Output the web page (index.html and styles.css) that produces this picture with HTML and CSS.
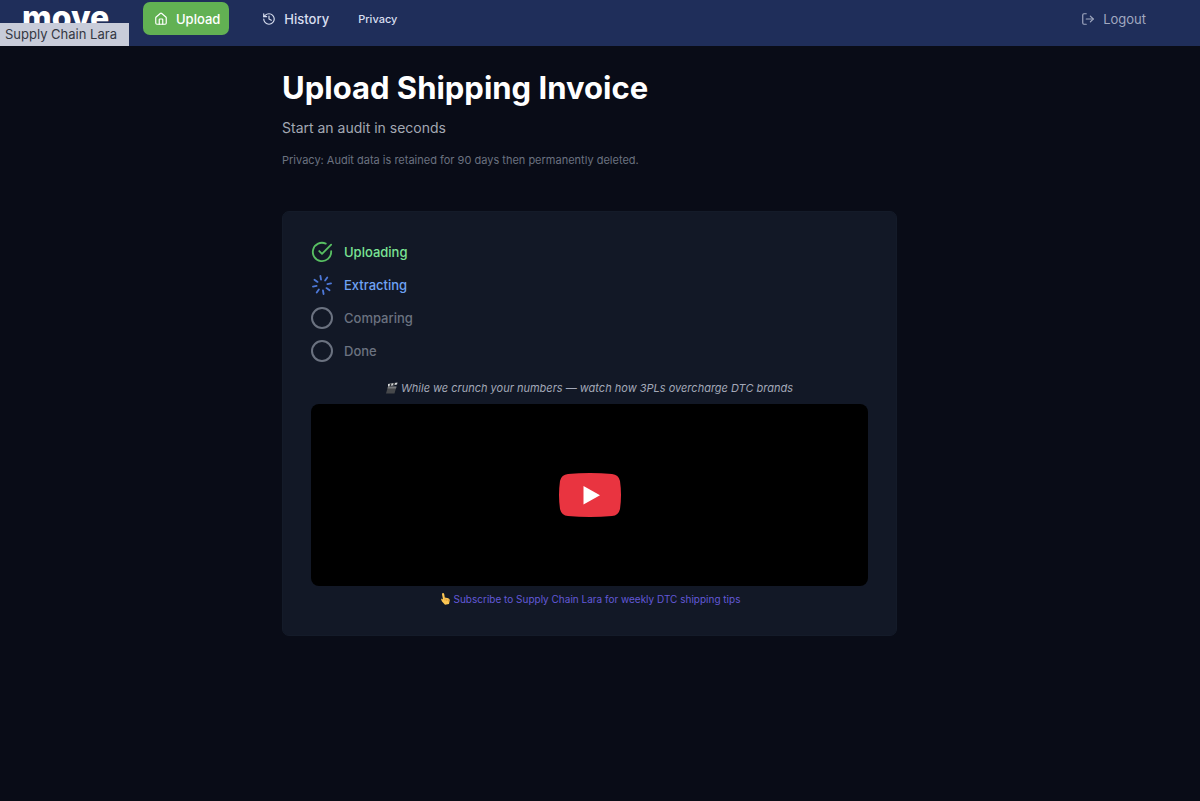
FILE: index.html
```html
<!DOCTYPE html>
<html lang="en">
<head>
    <meta charset="UTF-8">
    <meta name="viewport" content="width=device-width, initial-scale=1.0">
    <title>Upload Shipping Invoice</title>
    <link rel="stylesheet" href="styles.css">
</head>
<body>

    <header class="navbar">
        <a href="#" class="logo">move<span class="logo-tip">Supply Chain Lara</span></a>
        <nav class="nav-links">
            <a href="#" class="nav-link active">
                <svg class="nav-icon" viewBox="0 0 24 24"><path d="M15 21v-8a1 1 0 0 0-1-1h-4a1 1 0 0 0-1 1v8"/><path d="M3 10a2 2 0 0 1 .709-1.528l7-5.999a2 2 0 0 1 2.582 0l7 5.999A2 2 0 0 1 21 10v9a2 2 0 0 1-2 2H5a2 2 0 0 1-2-2z"/></svg>
                Upload
            </a>
            <a href="#" class="nav-link">
                <svg class="nav-icon" viewBox="0 0 24 24"><path d="M3 12a9 9 0 1 0 9-9 9.75 9.75 0 0 0-6.74 2.74L3 8"/><path d="M3 3v5h5"/><path d="M12 7v5l4 2"/></svg>
                History
            </a>
            <a href="#" class="nav-link small">Privacy</a>
        </nav>
        <button type="button" class="logout">
            <svg class="nav-icon" viewBox="0 0 24 24"><path d="M9 21H5a2 2 0 0 1-2-2V5a2 2 0 0 1 2-2h4"/><path d="M16 17l5-5-5-5"/><path d="M21 12H9"/></svg>
            Logout
        </button>
    </header>

    <main>
        <h1>Upload Shipping Invoice</h1>
        <p class="subtitle">Start an audit in seconds</p>
        <p class="privacy-note">Privacy: Audit data is retained for 90 days then permanently deleted.</p>

        <section class="card">
            <ul class="steps">
                <li class="step done">
                    <svg class="step-icon" viewBox="0 0 24 24"><path d="M22 11.08V12a10 10 0 1 1-5.93-9.14"/><path d="M9 11l3 3L22 4"/></svg>
                    Uploading
                </li>
                <li class="step current">
                    <svg class="step-icon" viewBox="0 0 24 24"><g transform="rotate(-10 12 12)"><path d="M12 2v4"/><path d="M16.2 7.8l2.9-2.9"/><path d="M18 12h4"/><path d="M16.2 16.2l2.9 2.9"/><path d="M12 18v4"/><path d="M4.9 19.1l2.9-2.9"/><path d="M2 12h4"/><path d="M4.9 4.9l2.9 2.9"/></g></svg>
                    Extracting
                </li>
                <li class="step">
                    <span class="step-circle"></span>
                    Comparing
                </li>
                <li class="step">
                    <span class="step-circle"></span>
                    Done
                </li>
            </ul>

            <p class="video-caption">
                <svg class="emoji" viewBox="0 0 24 24"><path d="M4 9h17l-4 14H0z" fill="#46484b"/><path d="M4 9h17l-1 4H3z" fill="#77797c"/><path d="M4 4l19-3-1 4L4 9z" fill="#d5d7d8"/><path d="M8 3.300l3-.5-1 5-3 .6zM15 2.200l3-.5-1 4.600-3 .6z" fill="#303236"/></svg>
                While we crunch your numbers — watch how 3PLs overcharge DTC brands
            </p>
            <div class="video">
                <button type="button" class="play" aria-label="Play video">
                    <svg viewBox="0 0 62 44"><path d="M9 1Q31-1 53 1Q59.500 1.500 61 8Q63 22 61 36Q59.500 42.500 53 43Q31 45 9 43Q2.500 42.500 1 36Q-1 22 1 8Q2.500 1.500 9 1z" fill="#e93440"/><path d="M24.500 13v18.500l16.500-9.250z" fill="#fff"/></svg>
                </button>
            </div>
            <p class="subscribe">
                <a href="#">
                    <svg class="emoji" viewBox="0 0 24 24"><path d="M6 2.500Q6 0 8 0t2.500 2.500L11.500 9l7 1.500q3 1 3 4L20 22l-8 1.500L6 17Q3 12 5 11l3 2z" fill="#fbc653"/><path d="M12 11v4M15.500 12v4M19 13v4" stroke="#d8892c" stroke-width="1.200"/></svg>
                    Subscribe to Supply Chain Lara for weekly DTC shipping tips
                </a>
            </p>
        </section>
    </main>

</body>
</html>
```
FILE: styles.css
```css
:root {
    --bg: #090c17;
    --nav-bg: #1f2e5a;
    --card-bg: #121826;
    --green: #62b153;
    --muted: #6b7280;
}

* {
    box-sizing: border-box;
}

body {
    margin: 0;
    min-height: 100vh;
    background-color: var(--bg);
    color: #ffffff;
    font-family: Inter, sans-serif;
}

h1, p, ul {
    margin: 0;
    padding: 0;
}

a {
    text-decoration: none;
}

/* Navigation */
.navbar {
    display: flex;
    align-items: flex-start;
    height: 46px;
    padding: 2px 43px 0 22px;
    background-color: var(--nav-bg);
}

.logo {
    position: relative;
    width: 121px;
    color: #ffffff;
    font-size: 32px;
    font-weight: 800;
    line-height: 32px;
}

.logo-tip {
    position: absolute;
    top: 21px;
    left: -22px;
    width: 129px;
    padding-left: 5px;
    background-color: #c8ccd9;
    color: #343843;
    font-size: 13px;
    font-weight: 400;
    line-height: 23px;
    white-space: nowrap;
}

.nav-links {
    display: flex;
    gap: 22px;
    flex: 1;
}

.nav-link, .logout {
    display: flex;
    align-items: center;
    gap: 8px;
    height: 33px;
    padding: 0 11px;
    border: none;
    border-radius: 7px;
    background: none;
    color: #d9dff0;
    font-family: inherit;
    font-size: 13px;
    font-weight: 500;
}

.nav-link.active {
    padding-right: 9px;
    background-color: var(--green);
    color: #ffffff;
}

.nav-link.small {
    padding: 0;
    margin-left: -4px;
    font-size: 11px;
}

.logout {
    color: #a1a9c0;
    font-weight: 400;
    cursor: pointer;
}

.nav-icon, .step-icon {
    width: 14px;
    height: 14px;
    fill: none;
    stroke: currentColor;
    stroke-width: 2;
    stroke-linecap: round;
    stroke-linejoin: round;
}

/* Page content */
main {
    max-width: 636px;
    margin: 0 auto;
    padding: 22px 21px 40px 0;
}

h1 {
    font-size: 31px;
    font-weight: 700;
    line-height: 40px;
}

.subtitle {
    margin-top: 8px;
    color: #a3a8b3;
    font-size: 14px;
    line-height: 24px;
}

.privacy-note {
    margin-top: 12px;
    color: var(--muted);
    font-size: 11px;
    line-height: 16px;
}

.card {
    margin-top: 43px;
    padding: 29px 28px 28px;
    border: 1px solid #141b29;
    border-radius: 7px;
    background-color: var(--card-bg);
}

.steps {
    display: flex;
    flex-direction: column;
    gap: 11px;
    list-style: none;
}

.step {
    display: flex;
    align-items: center;
    gap: 11px;
    height: 22px;
    color: var(--muted);
    font-size: 13px;
    font-weight: 500;
}

.step.done {
    color: #7be495;
}

.step.current {
    color: #6fa3f5;
}

.step-icon, .step-circle {
    width: 22px;
    height: 22px;
}

.step.done .step-icon {
    stroke: #58bf62;
}

.step.current .step-icon {
    stroke: #4d78d8;
}

.step-circle {
    border: 2px solid var(--muted);
    border-radius: 50%;
}

/* Video */
.video-caption {
    display: flex;
    align-items: center;
    justify-content: center;
    gap: 3px;
    margin-top: 18px;
    color: #a3a8b8;
    font-size: 11px;
    font-style: italic;
    line-height: 16px;
}

.emoji {
    width: 12px;
    height: 12px;
}

.video {
    display: flex;
    align-items: center;
    justify-content: center;
    height: 182px;
    margin-top: 8px;
    border-radius: 8px;
    background-color: #000000;
}

.play {
    display: flex;
    width: 62px;
    padding: 0;
    border: none;
    background: none;
    cursor: pointer;
}

.play svg {
    width: 100%;
}

.subscribe {
    margin-top: 5px;
    font-size: 10px;
    line-height: 16px;
}

.subscribe a {
    display: flex;
    align-items: center;
    justify-content: center;
    gap: 3px;
    color: #6258d8;
}
```
